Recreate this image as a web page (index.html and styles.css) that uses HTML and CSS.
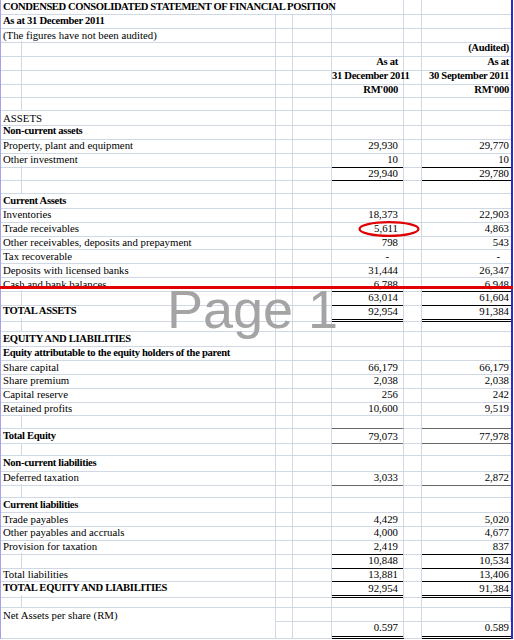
FILE: index.html
```html
<!DOCTYPE html>
<html>
<head>
<meta charset="utf-8">
<link rel="stylesheet" href="styles.css">
</head>
<body>
<div class="sheet">
  <div class="r"><div class="t b cap">CONDENSED CONSOLIDATED STATEMENT OF FINANCIAL POSITION</div><div></div><div></div><div></div></div>
  <div class="r"><div class="l b">As at 31 December 2011</div><div></div><div></div><div></div><div></div><div></div></div>
  <div class="r"><div class="l">(The figures have not been audited)</div><div></div><div></div><div></div><div></div><div></div></div>
  <div class="r"><div></div><div></div><div></div><div></div><div></div><div></div><div class="g b">(Audited)</div></div>
  <div class="r"><div></div><div></div><div></div><div></div><div class="e b">As at</div><div></div><div class="g b">As at</div></div>
  <div class="r"><div></div><div></div><div></div><div></div><div class="e b">31 December 2011</div><div></div><div class="g b">30 September 2011</div></div>
  <div class="r"><div></div><div></div><div></div><div></div><div class="e b">RM'000</div><div></div><div class="g b">RM'000</div></div>
  <div class="r"><div></div><div></div><div></div><div></div><div></div><div></div><div></div></div>
  <div class="r"><div class="l">ASSETS</div><div></div><div></div><div></div><div></div><div></div></div>
  <div class="r"><div class="l b">Non-current assets</div><div></div><div></div><div></div><div></div><div></div></div>
  <div class="r"><div class="l">Property, plant and equipment</div><div></div><div></div><div class="e">29,930</div><div></div><div class="g">29,770</div></div>
  <div class="r"><div class="l">Other investment</div><div></div><div></div><div class="e u">10</div><div></div><div class="g u">10</div></div>
  <div class="r"><div></div><div></div><div></div><div></div><div class="e u">29,940</div><div></div><div class="g u">29,780</div></div>
  <div class="r"><div></div><div></div><div></div><div></div><div></div><div></div><div></div></div>
  <div class="r"><div class="l b">Current Assets</div><div></div><div></div><div></div><div></div><div></div></div>
  <div class="r"><div class="l">Inventories</div><div></div><div></div><div class="e">18,373</div><div></div><div class="g">22,903</div></div>
  <div class="r"><div class="l">Trade receivables</div><div></div><div></div><div class="e">5,611</div><div></div><div class="g">4,863</div></div>
  <div class="r"><div class="l">Other receivables, deposits and prepayment</div><div></div><div></div><div class="e">798</div><div></div><div class="g">543</div></div>
  <div class="r"><div class="l">Tax recoverable</div><div></div><div></div><div class="e dash">-</div><div></div><div class="g dash">-</div></div>
  <div class="r"><div class="l">Deposits with licensed banks</div><div></div><div></div><div class="e">31,444</div><div></div><div class="g">26,347</div></div>
  <div class="r"><div class="l">Cash and bank balances</div><div></div><div></div><div class="e u">6,788</div><div></div><div class="g u">6,948</div></div>
  <div class="r"><div></div><div></div><div></div><div></div><div class="e u">63,014</div><div></div><div class="g u">61,604</div></div>
  <div class="r"><div class="l b">TOTAL ASSETS</div><div></div><div></div><div class="e d">92,954</div><div></div><div class="g d">91,384</div></div>
  <div class="r"><div></div><div></div><div></div><div></div><div></div><div></div><div></div></div>
  <div class="r"><div class="l b">EQUITY AND LIABILITIES</div><div></div><div></div><div></div><div></div><div></div></div>
  <div class="r"><div class="l b">Equity attributable to the equity holders of the parent</div><div></div><div></div><div></div><div></div><div></div></div>
  <div class="r"><div class="l">Share capital</div><div></div><div></div><div class="e">66,179</div><div></div><div class="g">66,179</div></div>
  <div class="r"><div class="l">Share premium</div><div></div><div></div><div class="e">2,038</div><div></div><div class="g">2,038</div></div>
  <div class="r"><div class="l">Capital reserve</div><div></div><div></div><div class="e">256</div><div></div><div class="g">242</div></div>
  <div class="r"><div class="l">Retained profits</div><div></div><div></div><div class="e">10,600</div><div></div><div class="g">9,519</div></div>
  <div class="r"><div></div><div></div><div></div><div></div><div class="e ug"></div><div></div><div class="g ug"></div></div>
  <div class="r"><div class="l b">Total Equity</div><div></div><div></div><div class="e ug">79,073</div><div></div><div class="g ug">77,978</div></div>
  <div class="r"><div></div><div></div><div></div><div></div><div></div><div></div><div></div></div>
  <div class="r"><div class="l b">Non-current liabilities</div><div></div><div></div><div></div><div></div><div></div></div>
  <div class="r"><div class="l">Deferred taxation</div><div></div><div></div><div class="e ug">3,033</div><div></div><div class="g ug">2,872</div></div>
  <div class="r"><div></div><div></div><div></div><div></div><div></div><div></div><div></div></div>
  <div class="r"><div class="l b">Current liabilities</div><div></div><div></div><div></div><div></div><div></div></div>
  <div class="r"><div class="l">Trade payables</div><div></div><div></div><div class="e">4,429</div><div></div><div class="g">5,020</div></div>
  <div class="r"><div class="l">Other payables and accruals</div><div></div><div></div><div class="e">4,000</div><div></div><div class="g">4,677</div></div>
  <div class="r"><div class="l">Provision for taxation</div><div></div><div></div><div class="e u">2,419</div><div></div><div class="g u">837</div></div>
  <div class="r"><div></div><div></div><div></div><div></div><div class="e u">10,848</div><div></div><div class="g u">10,534</div></div>
  <div class="r"><div class="l">Total liabilities</div><div></div><div></div><div class="e u">13,881</div><div></div><div class="g u">13,406</div></div>
  <div class="r"><div class="l b">TOTAL EQUITY AND LIABILITIES</div><div></div><div></div><div class="e d">92,954</div><div></div><div class="g d">91,384</div></div>
  <div class="r"><div></div><div></div><div></div><div></div><div></div><div></div><div></div></div>
  <div class="r last"><div class="l tall">Net Assets per share (RM)</div><div></div><div></div><div></div><div></div><div></div><div></div><div></div><div class="e d lo">0.597</div><div></div><div class="g d lo">0.589</div></div>

  <div class="wm">Page 1</div>
  <div class="pbreak"></div>
  <svg class="mark" viewBox="0 0 62 16" aria-hidden="true"><ellipse cx="31" cy="8" rx="29.5" ry="6.8" fill="none" stroke="#e00000" stroke-width="2.2"/></svg>
</div>
</body>
</html>
```
FILE: styles.css
```css
* { box-sizing: border-box; }
html, body { margin: 0; padding: 0; background: #ffffff; }
body {
  width: 514px;
  height: 640px;
  overflow: hidden;
  font-family: "Liberation Serif", "Times New Roman", serif;
  font-size: 10.8px;
  color: #000;
}
.sheet {
  position: relative;
  width: 513px;
  border-left: 1px solid #a3a3e8;
  border-right: 2px solid #2a2ad2;
}
.r {
  display: grid;
  grid-template-columns: 21px 254px 17px 39px 72px 18px 89px;
  height: 13.84px;
}
.r > div {
  border-right: 1px solid #d0d7e5;
  border-bottom: 1px solid #d0d7e5;
  white-space: nowrap;
  line-height: 14.4px;
  min-width: 0;
}
.r > div:last-child { border-right: 0; }
.l { grid-column: 1 / 3; padding-left: 2px; }
.t { grid-column: 1 / 5; padding-left: 2px; }
.b { font-weight: bold; font-size: 10.6px; letter-spacing: -0.3px; }
.cap { letter-spacing: -0.42px; }
.e { text-align: right; padding-right: 5px; }
.g { text-align: right; padding-right: 2px; }
.dash.e { padding-right: 14px; }
.dash.g { padding-right: 11px; }
.r > .u { border-bottom-color: #000; }
.r > .ug { border-bottom-color: #6a6a6a; }
.r > .d { border-bottom: 3px double #000; }

.last {
  height: auto;
  grid-template-rows: 13.84px 17.2px;
}
.last > .tall { grid-row: 1 / 3; line-height: 14.6px; }
.last > div.lo { line-height: 11.5px; }

.wm {
  position: absolute;
  left: 166px;
  top: 282px;
  font-family: "Liberation Sans", Arial, sans-serif;
  font-size: 54px;
  line-height: 54px;
  color: #a4a4a4;
  white-space: nowrap;
  pointer-events: none;
}
.pbreak {
  position: absolute;
  left: -1px;
  right: -2px;
  top: 286px;
  height: 3px;
  background: #e30000;
}
.mark {
  position: absolute;
  left: 357px;
  top: 221px;
  width: 62px;
  height: 16px;
}
```
